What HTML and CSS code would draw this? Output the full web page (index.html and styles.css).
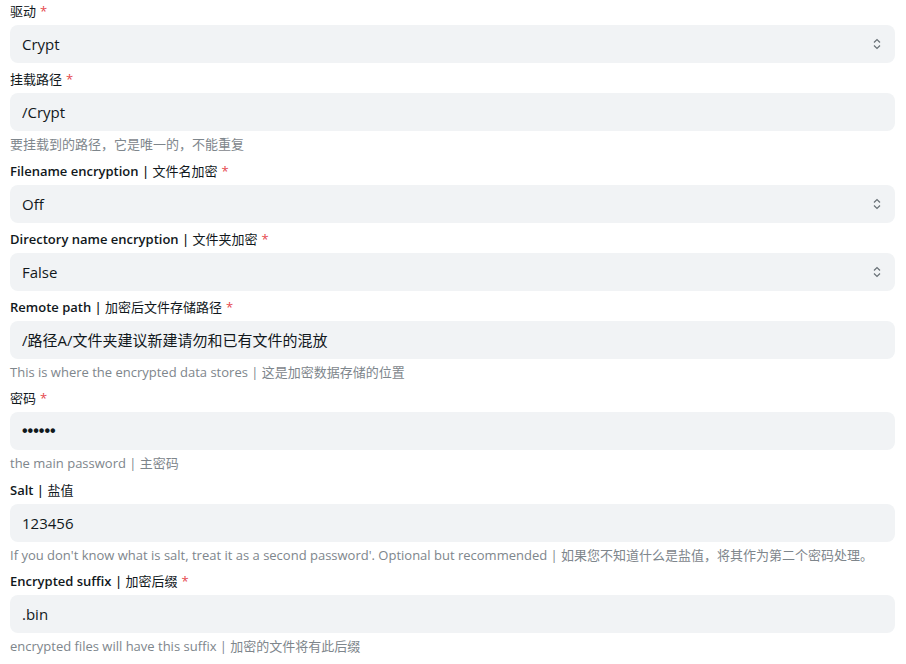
FILE: index.html
```html
<!DOCTYPE html>
<html>
<head>
    <meta charset="UTF-8">
    <link rel="stylesheet" href="styles.css">
</head>
<body>
    <form class="form">
        <div class="field">
            <label class="field-label"><span class="zh">驱动</span><span class="req">*</span></label>
            <div class="select-wrap">
                <select class="control">
                    <option>Crypt</option>
                </select>
                <svg class="select-icon" viewBox="0 0 8 12"><path d="M1 4.5 4 1.5 7 4.5M1 7.5 4 10.5 7 7.5"/></svg>
            </div>
        </div>

        <div class="field">
            <label class="field-label"><span class="zh">挂载路径</span><span class="req">*</span></label>
            <input class="control" type="text" value="/Crypt">
            <div class="helper">要挂载到的路径，它是唯一的，不能重复</div>
        </div>

        <div class="field">
            <label class="field-label">Filename encryption | <span class="zh">文件名加密</span><span class="req">*</span></label>
            <div class="select-wrap">
                <select class="control">
                    <option>Off</option>
                </select>
                <svg class="select-icon" viewBox="0 0 8 12"><path d="M1 4.5 4 1.5 7 4.5M1 7.5 4 10.5 7 7.5"/></svg>
            </div>
        </div>

        <div class="field">
            <label class="field-label">Directory name encryption | <span class="zh">文件夹加密</span><span class="req">*</span></label>
            <div class="select-wrap">
                <select class="control">
                    <option>False</option>
                </select>
                <svg class="select-icon" viewBox="0 0 8 12"><path d="M1 4.5 4 1.5 7 4.5M1 7.5 4 10.5 7 7.5"/></svg>
            </div>
        </div>

        <div class="field">
            <label class="field-label">Remote path | <span class="zh">加密后文件存储路径</span><span class="req">*</span></label>
            <input class="control" type="text" value="/路径A/文件夹建议新建请勿和已有文件的混放">
            <div class="helper">This is where the encrypted data stores | 这是加密数据存储的位置</div>
        </div>

        <div class="field">
            <label class="field-label"><span class="zh">密码</span><span class="req">*</span></label>
            <input class="control password" type="password" value="123456">
            <div class="helper">the main password | 主密码</div>
        </div>

        <div class="field">
            <label class="field-label">Salt | <span class="zh">盐值</span></label>
            <input class="control" type="text" value="123456">
            <div class="helper">If you don't know what is salt, treat it as a second password'. Optional but recommended | 如果您不知道什么是盐值，将其作为第二个密码处理。</div>
        </div>

        <div class="field">
            <label class="field-label">Encrypted suffix | <span class="zh">加密后缀</span><span class="req">*</span></label>
            <input class="control" type="text" value=".bin">
            <div class="helper">encrypted files will have this suffix | 加密的文件将有此后缀</div>
        </div>
    </form>
</body>
</html>
```

FILE: styles.css
```css
body {
    margin: 0;
    background: #fff;
    font-family: "Open Sans", "Noto Sans CJK SC", sans-serif;
    color: #11181c;
}

.form {
    display: flex;
    flex-direction: column;
    gap: 6px;
    padding: 1px 11px 0 10px;
}

.field {
    display: flex;
    flex-direction: column;
}

.field-label {
    font-size: 13px;
    line-height: 20px;
    font-weight: 600;
    margin-bottom: 4px;
}

.zh {
    font-weight: 400;
}

.req {
    color: #e5484d;
    margin-left: 4px;
    font-weight: 400;
}

.control {
    box-sizing: border-box;
    width: 100%;
    height: 38px;
    padding: 0 12px;
    border: none;
    border-radius: 8px;
    background: #f1f3f5;
    font-family: inherit;
    font-size: 15px;
    color: #11181c;
    outline: none;
    appearance: none;
    -webkit-appearance: none;
}

.password {
    font-family: "Liberation Sans", sans-serif;
    font-size: 16px;
    font-weight: 700;
}

.select-wrap {
    position: relative;
}

.select-icon {
    position: absolute;
    right: 14px;
    top: 13px;
    width: 8px;
    height: 12px;
    fill: none;
    stroke: #687076;
    stroke-width: 1.2;
    pointer-events: none;
}

.helper {
    margin-top: 4px;
    font-size: 13px;
    line-height: 19.5px;
    color: #7e868c;
}
```
